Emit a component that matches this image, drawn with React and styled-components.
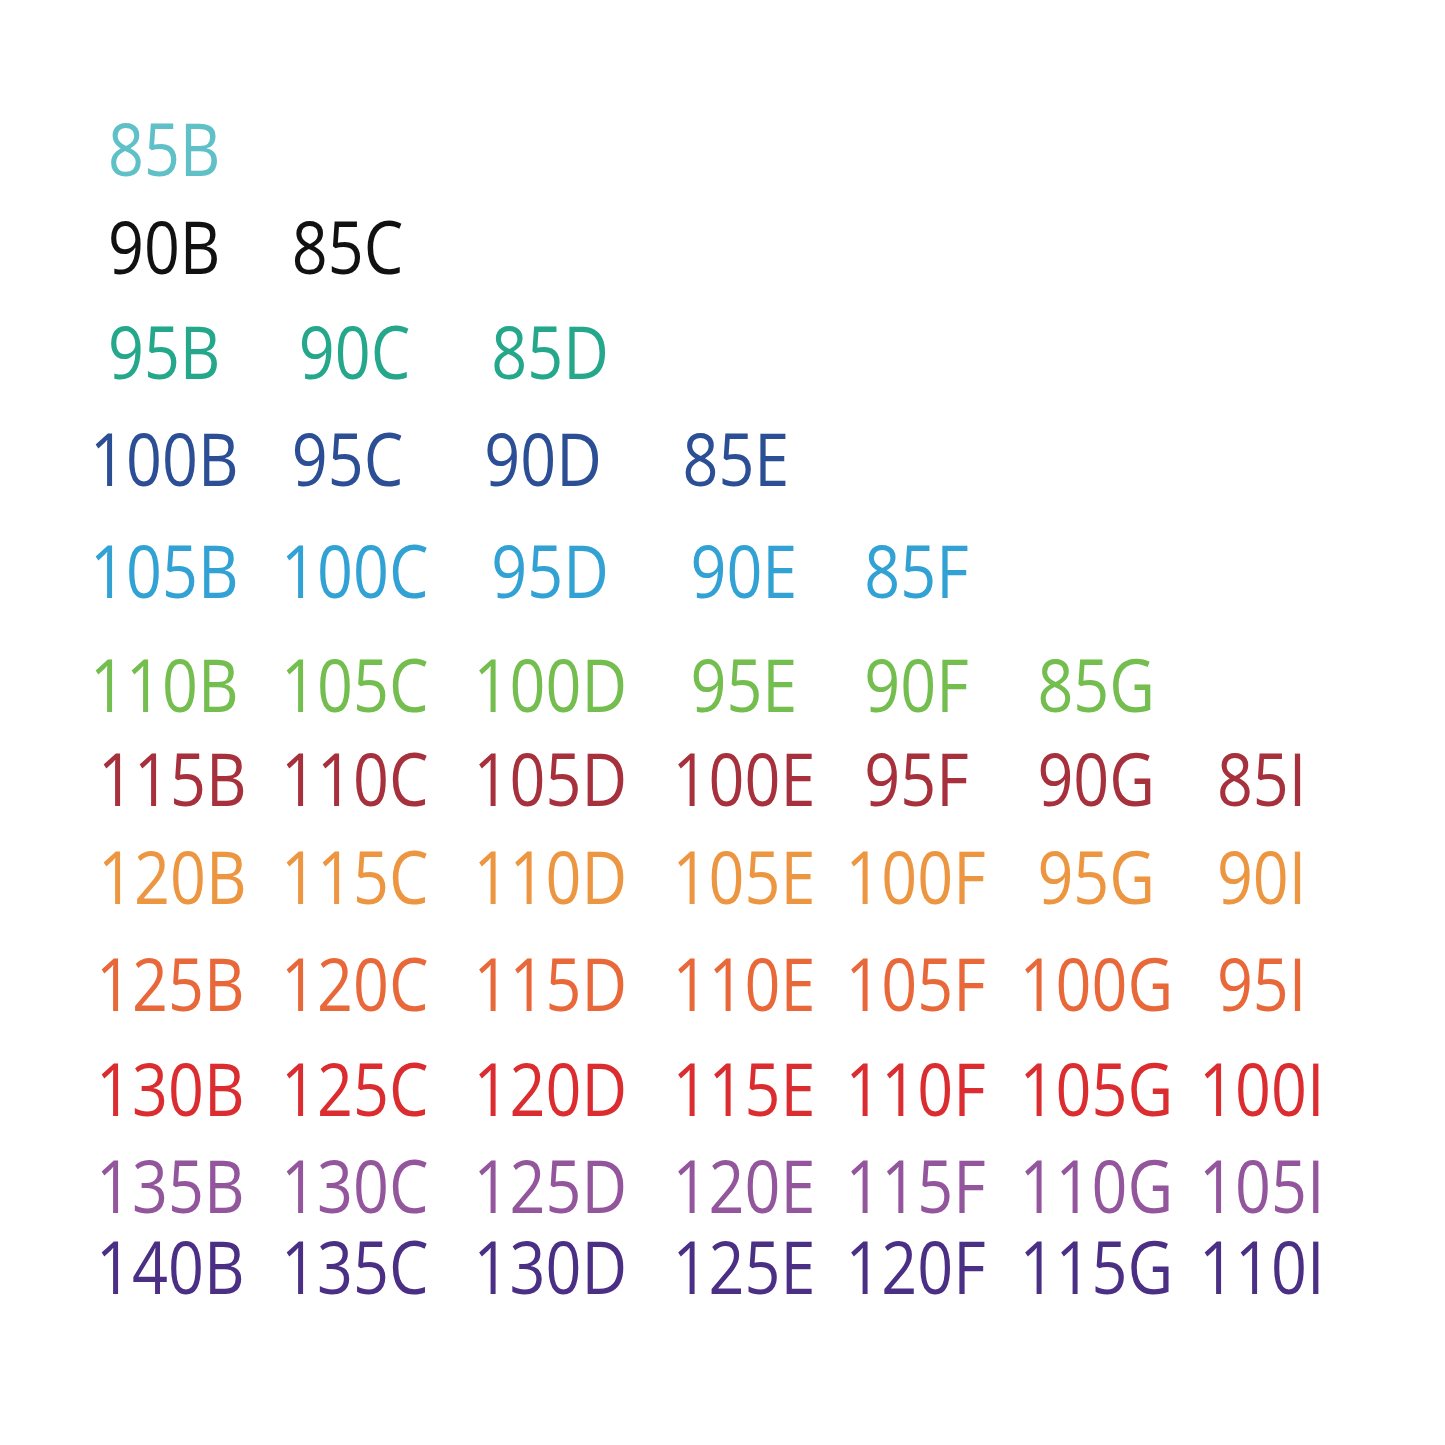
import React from 'react';
import styled, { createGlobalStyle } from 'styled-components';

const GlobalStyle = createGlobalStyle`
    html, body {
        margin: 0;
        padding: 0;
        background: #ffffff;
    }
`;

const Page = styled.div`
    width: 1445px;
    height: 1445px;
    background: #ffffff;
    padding: 111px 0 0 78px;
    box-sizing: border-box;
    font-family: "Open Sans", "Noto Sans", sans-serif;
`;

const Chart = styled.div`
    display: flex;
    flex-direction: column;
`;

const Row = styled.div`
    display: grid;
    grid-template-columns: 180px 194px 196px 192px 152px 208px 124px;
    align-items: start;
    height: ${({ h }) => h}px;
    color: ${({ color }) => color};
`;

const Cell = styled.div`
    display: flex;
    justify-content: center;
    transform: translateX(${({ dx }) => dx || 0}px);
`;

const Size = styled.span`
    display: inline-block;
    font-size: 74px;
    font-weight: 400;
    line-height: 1;
    transform: scaleX(0.85);
    transform-origin: center;
    white-space: nowrap;
`;

// h = distance to the next row, shift = nudge per cell (px)
const rows = [
    { color: '#5fc0c8', h: 98, cells: ['85B'], shift: [-4] },
    { color: '#111111', h: 105, cells: ['90B', '85C'], shift: [-4, -7] },
    { color: '#24a78b', h: 107, cells: ['95B', '90C', '85D'], shift: [-4] },
    { color: '#2b4e94', h: 112, cells: ['100B', '95C', '90D', '85E'], shift: [-4, -7, -7, -8] },
    { color: '#31a2d3', h: 114, cells: ['105B', '100C', '95D', '90E', '85F'], shift: [-4] },
    { color: '#74bd4f', h: 94, cells: ['110B', '105C', '100D', '95E', '90F', '85G'], shift: [-4] },
    { color: '#a6303b', h: 98, cells: ['115B', '110C', '105D', '100E', '95F', '90G', '85I'], shift: [4] },
    { color: '#ed9641', h: 107, cells: ['120B', '115C', '110D', '105E', '100F', '95G', '90I'], shift: [4] },
    { color: '#e8683a', h: 105, cells: ['125B', '120C', '115D', '110E', '105F', '100G', '95I'], shift: [2] },
    { color: '#db2c30', h: 97, cells: ['130B', '125C', '120D', '115E', '110F', '105G', '100I'], shift: [2] },
    { color: '#93569d', h: 81, cells: ['135B', '130C', '125D', '120E', '115F', '110G', '105I'], shift: [2] },
    { color: '#4a2f85', h: 98, cells: ['140B', '135C', '130D', '125E', '120F', '115G', '110I'], shift: [2] },
];

const App = () => {
    return (
        <>
            <GlobalStyle />
            <Page>
                <Chart>
                    {rows.map(row => (
                        <Row key={row.cells[0]} color={row.color} h={row.h}>
                            {row.cells.map((label, i) => (
                                <Cell key={label} dx={row.shift[i]}>
                                    <Size>{label}</Size>
                                </Cell>
                            ))}
                        </Row>
                    ))}
                </Chart>
            </Page>
        </>
    );
};

export default App;
